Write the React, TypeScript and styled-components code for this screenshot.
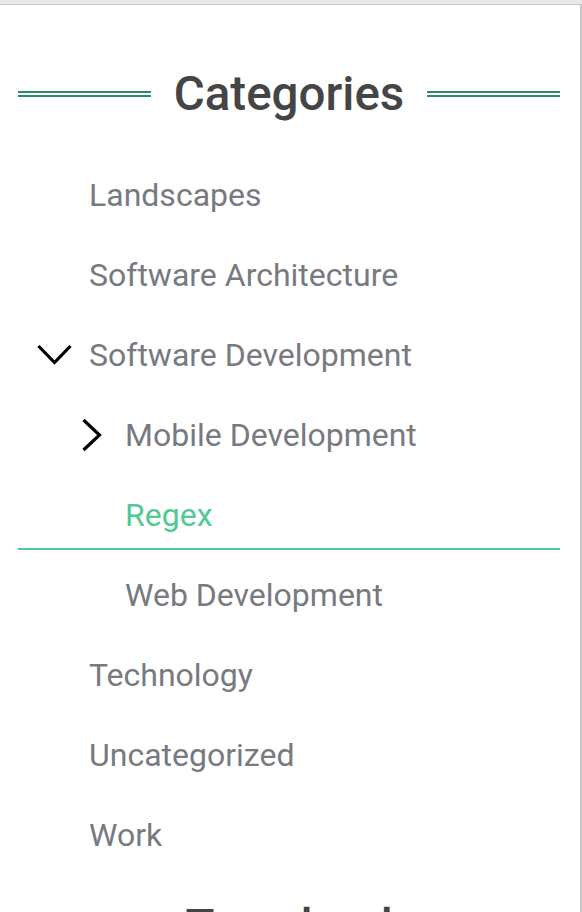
import React from "react";
import styled, { createGlobalStyle } from "styled-components";

const Global = createGlobalStyle`
  html, body { margin: 0; padding: 0; background: #e9e9e9; }
  body { font-family: Roboto, "Liberation Sans", sans-serif; overflow: hidden; }
`;

const Page = styled.div`
  padding-top: 4px;
  height: 912px;
  box-sizing: border-box;
`;

const Widget = styled.section`
  background: #fff;
  border-top: 1px solid #c9c9c9;
  border-right: 2px solid #c6c6c6;
  height: 100%;
  box-sizing: border-box;
  padding: 59px 20px 0 18px;
`;

const Heading = styled.h2`
  display: flex;
  align-items: center;
  gap: 23px;
  margin: 0;
  height: 60px;
  font-family: Roboto, "Liberation Sans", sans-serif;
  font-weight: 500;
  font-size: 47.5px;
  color: #454545;
  white-space: nowrap;
  &::before, &::after {
    content: "";
    flex: 1;
    height: 2px;
    border-top: 2px solid #2d8a63;
    border-bottom: 2px solid #2d8a63;
  }
`;

const List = styled.ul`
  list-style: none;
  margin: 31px 0 27px;
  padding: 0;
`;

const Row = styled.li<{ $depth: number; $active?: boolean }>`
  display: flex;
  align-items: center;
  height: 75px;
  box-sizing: border-box;
  padding: 7px 0 0 ${(p) => 18 + p.$depth * 36}px;
  margin-bottom: 5px;
  border-bottom: 2px solid ${(p) => (p.$active ? "#52c993" : "transparent")};
  font-size: 32px;
  color: ${(p) => (p.$active ? "#52c993" : "#777a7f")};
`;

const IconSlot = styled.span`
  width: 53px;
  flex: none;
  display: flex;
  align-items: center;
`;

const Chevron = styled.svg`
  width: 36px;
  height: 36px;
  display: block;
`;

const Down = () => (
  <Chevron viewBox="0 0 36 36">
    <polyline points="2.5,9 18.5,25.5 34.5,9" fill="none" stroke="#000" strokeWidth="3.2" />
  </Chevron>
);

const Right = () => (
  <Chevron viewBox="0 0 36 36">
    <polyline points="11.5,3 27.5,18 11.5,33" fill="none" stroke="#000" strokeWidth="3.2" />
  </Chevron>
);

type Item = { label: string; depth: number; icon?: "down" | "right"; active?: boolean };

const items: Item[] = [
  { label: "Landscapes", depth: 0 },
  { label: "Software Architecture", depth: 0 },
  { label: "Software Development", depth: 0, icon: "down" },
  { label: "Mobile Development", depth: 1, icon: "right" },
  { label: "Regex", depth: 1, active: true },
  { label: "Web Development", depth: 1 },
  { label: "Technology", depth: 0 },
  { label: "Uncategorized", depth: 0 },
  { label: "Work", depth: 0 },
];

export default function App() {
  return (
    <Page>
      <Global />
      <Widget>
        <Heading>Categories</Heading>
        <List>
          {items.map((it) => (
            <Row key={it.label} $depth={it.depth} $active={it.active}>
              <IconSlot>{it.icon === "down" ? <Down /> : it.icon === "right" ? <Right /> : null}</IconSlot>
              {it.label}
            </Row>
          ))}
        </List>
        <Heading>Tag cloud</Heading>
      </Widget>
    </Page>
  );
}
